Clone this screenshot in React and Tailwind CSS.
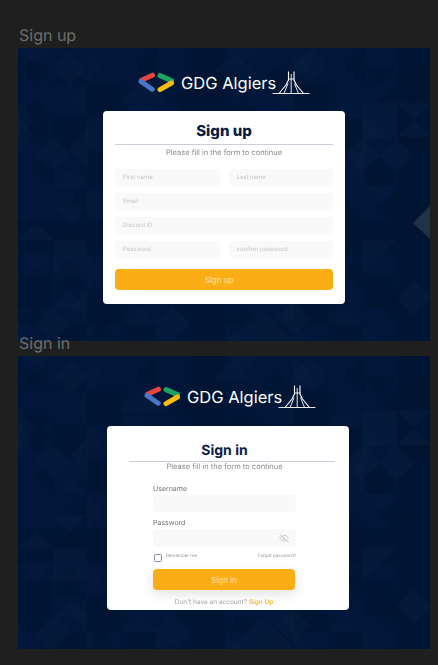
import { EyeOff } from "lucide-react";

const diamond = (x, y, r) => `${x},${y - r} ${x + r},${y} ${x},${y + r} ${x - r},${y}`;

// background tiles, in frame coordinates (412x293)
const LIGHT_TILES = [
  diamond(52, 21, 17),
  diamond(35, 106, 17),
  diamond(35, 277, 17),
  diamond(292, 18, 17),
  diamond(344, 107, 17),
  diamond(379, 107, 17),
  diamond(396, 250, 17),
  diamond(155, 275, 17),
  diamond(275, 270, 17),
  "125,32 148,55 103,55",
  "215,4 235,24 195,24",
  "18,175 35,192 0,192",
  "35,192 69,192 69,226 35,226",
  "35,159 69,159 52,176",
  "52,244 69,261 35,261",
  "344,55 379,55 379,90 344,90",
  "379,55 413,55 396,72",
  "396,72 413,89 379,89",
  "344,192 378,192 344,226",
  "70,80 70,120 52,100",
  "0,55 18,72 0,90",
  "244,262 278,293 210,293",
];

const DARK_TILES = [
  diamond(17, 80, 17),
  diamond(17, 22, 14),
  diamond(396, 35, 17),
  diamond(361, 125, 17),
  diamond(378, 160, 17),
  "52,210 69,227 35,227",
  "52,176 69,193 35,193",
  "0,226 35,226 35,261 0,261",
  "344,21 378,21 361,38",
  "379,89 413,89 396,106",
  "100,240 85,293 70,293",
  "345,226 378,226 378,260 345,260",
];

// faint triangles filling the 34px grid behind the hand placed tiles
const CELL = 34.5;
const GRID_TILES = [];
for (let row = 0; row < 9; row++) {
  for (let col = 0; col < 12; col++) {
    const x = col * CELL;
    const y = row * CELL;
    const x2 = x + CELL;
    const y2 = y + CELL;
    const cx = x + CELL / 2;
    const cy = y + CELL / 2;
    const shapes = [
      `${x},${y} ${x2},${y} ${cx},${cy}`,
      `${x},${y2} ${x2},${y2} ${cx},${cy}`,
      `${x},${y} ${x},${y2} ${cx},${cy}`,
      `${x2},${y} ${x2},${y2} ${cx},${cy}`,
    ];
    const seed = (col * 7 + row * 13 + col * row) % 6;
    if (seed < 4) GRID_TILES.push({ points: shapes[seed], light: (col + row) % 2 === 0 });
    if (seed === 5) GRID_TILES.push({ points: `${x},${y} ${x2},${y} ${x2},${y2} ${x},${y2}`, light: false });
  }
}

function Pattern({ accent }) {
  return (
    <svg className="absolute inset-0 h-full w-full blur-[0.4px]" viewBox="0 0 412 293" preserveAspectRatio="none" aria-hidden>
      {GRID_TILES.map((tile) => (
        <polygon
          key={tile.points}
          points={tile.points}
          fill={tile.light ? "#ffffff" : "#000000"}
          fillOpacity={tile.light ? "0.012" : "0.07"}
        />
      ))}
      {LIGHT_TILES.map((points) => (
        <polygon key={points} points={points} fill="#ffffff" fillOpacity="0.016" />
      ))}
      {DARK_TILES.map((points) => (
        <polygon key={points} points={points} fill="#000000" fillOpacity="0.08" />
      ))}
      {accent && <polygon points="395,175 412,158 412,191" fill="#1f3347" />}
    </svg>
  );
}

function Logo({ className }) {
  return (
    <div className={`relative flex h-[26px] w-[172px] items-center ${className}`}>
      <svg width="36" height="26" viewBox="0 0 36 26" fill="none" strokeWidth="5" strokeLinecap="round" aria-hidden>
        <path d="M14.5 5.2 4 10" stroke="#e8453c" />
        <path d="M3 11.5 14.2 19.2" stroke="#4a76c6" />
        <path d="M22 5.6 33.5 10.6" stroke="#1ea362" />
        <path d="M33.5 13 22 19.6" stroke="#fbbc09" />
      </svg>
      <span className="ml-[7px] whitespace-nowrap text-[16.5px] leading-[26px] text-white">
        GDG Algiers
      </span>
      <svg className="absolute right-0 top-0" width="38" height="26" viewBox="0 0 38 26" fill="none" stroke="#ffffff" aria-hidden>
        <path d="M0.5 23.5H37.5" strokeWidth="0.9" />
        <path d="M16.5 1.5V10L14 15 7 23.5M22 1.5V10L24.5 15 31.5 23.5" strokeWidth="1.1" />
        <path d="M19.2 4V13M16 13.5 12 23.5M22.5 13.5 26.5 23.5M19.2 13V23.5M16 9H22.5" strokeWidth="0.9" />
      </svg>
    </div>
  );
}

function Field({ label, className = "" }) {
  return (
    <div className={`flex h-[17px] items-center rounded-[4px] bg-[#f9f9f9] px-2 text-[6px] text-[#c6c6c6] opacity-[0.99] ${className}`}>
      {label}
    </div>
  );
}

function Frame({ title, children }) {
  return (
    <section className="relative h-[293px] w-[412px] bg-[#011739]">
      <h2 className="absolute bottom-full left-px z-10 mb-[4px] text-[16px] leading-[18px] text-[#6e6e6e]">{title}</h2>
      {children}
    </section>
  );
}

function SignUp() {
  return (
    <Frame title="Sign up">
      <Pattern accent />
      <div className="relative flex flex-col items-start pt-[22px]">
        <Logo className="ml-[120px]" />
        <div className="ml-[85px] mt-[15px] flex h-[193px] w-[242px] flex-col rounded-[4px] bg-white px-3 pt-[10px]">
          <h1 className="text-center text-[15px] font-extrabold leading-[20px] text-[#0a1c45]">Sign up</h1>
          <div className="mt-[3px] h-px bg-[#c8cfdb]" />
          <p className="mt-[2px] text-center text-[7.5px] leading-[12px] text-[#8c8c8c] opacity-[0.99]">Please fill in the form to continue</p>
          <div className="mt-[10px] grid grid-cols-2 gap-x-[9px] gap-y-[7px]">
            <Field label="First name" />
            <Field label="Last name" />
            <Field label="Email" className="col-span-2" />
            <Field label="Discord ID" className="col-span-2" />
            <Field label="Password" />
            <Field label="confirm password" />
          </div>
          <button type="button" className="mt-[11px] h-[21px] rounded-[4px] bg-[#fbad16] pr-[10px] text-[8px] text-[#fde0a6]">
            Sign up
          </button>
        </div>
      </div>
    </Frame>
  );
}

function SignIn() {
  return (
    <Frame title="Sign in">
      <Pattern />
      <div className="relative flex flex-col items-start pt-[28px]">
        <Logo className="ml-[126px]" />
        <div className="ml-[89px] mt-[16px] flex h-[184px] w-[242px] flex-col rounded-[4px] bg-white pt-[15px]">
          <h1 className="pr-[7px] text-center text-[14px] font-bold leading-[20px] text-[#0a1c45]">Sign in</h1>
          <div className="ml-[22px] h-px w-[206px] bg-[#c8cfdb]" />
          <p className="pr-[7px] text-center text-[7.5px] leading-[10px] text-[#8c8c8c] opacity-[0.99]">Please fill in the form to continue</p>
          <form className="ml-[46px] mt-[12px] flex w-[143px] flex-col">
            <label className="text-[7px] leading-[10px] text-[#707070] opacity-[0.99]">Username</label>
            <div className="mt-px h-[17px] rounded-[4px] bg-[#f9f9f9]" />
            <label className="mt-[6px] text-[7px] leading-[10px] text-[#707070] opacity-[0.99]">Password</label>
            <div className="mt-px flex h-[18px] items-center justify-end rounded-[4px] bg-[#f9f9f9] pr-[7px]">
              <EyeOff size={10} className="text-[#c4c4c4]" />
            </div>
            <div className="mt-[6px] flex h-[9px] items-center opacity-[0.99]">
              <span className="ml-px h-[8px] w-[8px] rounded-[1.5px] border border-[#8a86ad] bg-white" />
              <span className="ml-[4px] text-[4.5px] text-[#9a9a9a]">Remember me</span>
              <span className="ml-auto text-[4.5px] text-[#9a9a9a]">Forgot password?</span>
            </div>
            <button type="button" className="mt-[7px] h-[21px] w-[142px] rounded-[4px] bg-[#fbad16] text-[8px] text-[#fde0a6] shadow-[0_4px_12px_rgba(0,0,0,0.12)]">
              Sign in
            </button>
          </form>
          <p className="mt-[7px] pr-[8px] text-center text-[6.5px] leading-[10px] text-[#a3a3a3] opacity-[0.99]">
            Don't have an account? <span className="font-semibold text-[#fbb92c]">Sign Up</span>
          </p>
        </div>
      </div>
    </Frame>
  );
}

export default function App() {
  return (
    <div className="flex h-[665px] w-[438px] flex-col gap-[15px] overflow-hidden bg-[#1f1f1f] pl-[18px] pt-[48px] font-['Inter',sans-serif] [text-rendering:geometricPrecision]">
      <SignUp />
      <SignIn />
    </div>
  );
}
